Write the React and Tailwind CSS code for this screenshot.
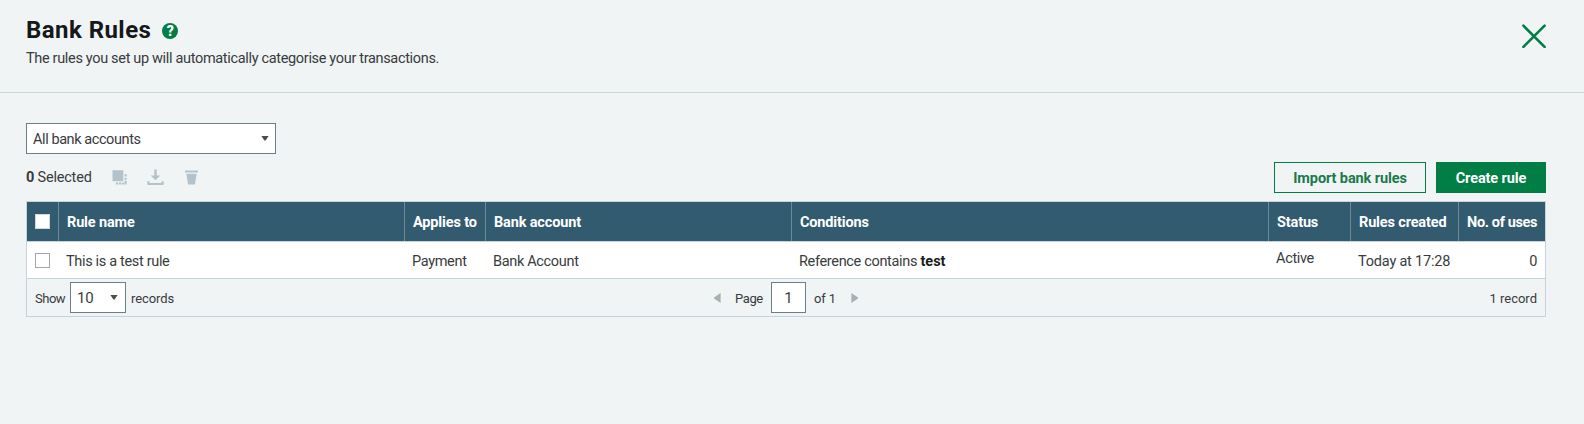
import clsx from "clsx";

const columns = [
  { key: "name", label: "Rule name", width: "w-[346px]" },
  { key: "appliesTo", label: "Applies to", width: "w-[81px]" },
  { key: "account", label: "Bank account", width: "w-[306px]" },
  { key: "conditions", label: "Conditions", width: "w-[477px]" },
  { key: "status", label: "Status", width: "w-[82px]" },
  { key: "created", label: "Rules created", width: "w-[108px]" },
  { key: "uses", label: "No. of uses", width: "w-[86px]" },
];

const rules = [
  {
    name: "This is a test rule",
    appliesTo: "Payment",
    account: "Bank Account",
    conditions: (
      <>
        Reference contains <b className="font-bold tracking-normal text-[#1b1d1e]">test</b>
      </>
    ),
    status: "Active",
    created: "Today at 17:28",
    uses: 0,
  },
];

function Caret() {
  return (
    <svg width="8" height="5" viewBox="0 0 8 5" fill="#4d4d4d">
      <path d="M0.4 0h7.2L4.6 4.4h-1.2z" />
    </svg>
  );
}

function Header() {
  return (
    <header className="flex h-[93px] justify-between border-b border-[#ccd6db] pl-[26px] pr-[38px]">
      <div className="pt-[14px]">
        <div className="flex items-center">
          <h1 className="text-[24px] leading-8 font-bold tracking-[0.45px] text-[#161819]">
            Bank Rules
          </h1>
          <span className="mt-[2px] ml-[11px] flex h-4 w-4 items-center justify-center rounded-full bg-[#007e45] text-[14px] leading-none font-black tracking-normal text-white">
            ?
          </span>
        </div>
        <p className="mt-[2px] leading-[22px]">
          The rules you set up will automatically categorise your transactions.
        </p>
      </div>
      <button className="mt-6 h-6 w-6" aria-label="Close">
        <svg width="24" height="24" viewBox="0 0 24 24" stroke="#007e45" strokeWidth="2.6" strokeLinecap="round">
          <path d="M1.4 1.7l21.2 21.2M22.6 1.7L1.4 22.9" />
        </svg>
      </button>
    </header>
  );
}

function Toolbar() {
  return (
    <div className="mt-[7px] flex h-8 items-center">
      <span className="w-[86px] pt-px tracking-[-0.2px] whitespace-nowrap">
        <b className="font-bold">0</b> Selected
      </span>
      <svg width="16" height="15" viewBox="0 0 16 15" fill="#b3c2cb">
        <path d="M0.5 0.3h10.8v10.9H0.5zM12.5 4.3h2.2v2.2h-2.2zM12.5 7.7h2.2v2h-2.2zM12.5 10.8h2.2v3.6h-2.2zM3.8 12.6h2.4v1.8H3.8zM6.9 12.6h2.2v1.8H6.9zM9.7 12.6h2.2v1.8H9.7z" />
      </svg>
      <svg className="ml-[19px]" width="17" height="17" viewBox="0 0 17 17" fill="#b3c2cb">
        <path d="M7.3 0.5h2.4v6h3.6L8.5 11.3 3.7 6.5h3.6zM0.3 12.3h2.2v1.7h12v-1.7h2.2v2.9q0 .8-.8.8H1.1q-.8 0-.8-.8z" />
      </svg>
      <svg className="ml-[21px]" width="13" height="15" viewBox="0 0 13 15" fill="#b3c2cb">
        <path d="M0 0.5h13v2H0zM1.3 3.8h10.4L10 14q-.1.6-.7.6H3.7q-.6 0-.7-.6z" />
      </svg>
      <div className="ml-auto flex h-[31px] gap-[10px] font-bold tracking-[-0.1px]">
        <button className="w-[152px] border border-[#007e45] pt-[3px] text-[#1c7a4c]">
          Import bank rules
        </button>
        <button className="w-[110px] bg-[#007e45] pt-[3px] text-white">Create rule</button>
      </div>
    </div>
  );
}

function RulesTable() {
  return (
    <div className="mt-2 border border-[#c6d3da]">
      <div className="flex h-10 border-b border-[#c6d3da] bg-[#335b70] font-bold tracking-[-0.15px] text-white">
        <div className="flex w-8 items-center border-r border-[#6c8997] pl-2">
          <span className="h-[15px] w-[15px] border border-[#d5d9db] bg-white" />
        </div>
        {columns.map((col, i) => (
          <div
            key={col.key}
            className={clsx(
              "flex items-center whitespace-nowrap pt-[2px] pl-2",
              col.width,
              i < columns.length - 1
                ? "border-r border-[#6c8997]"
                : "tracking-[-0.35px]"
            )}
          >
            {col.label}
          </div>
        ))}
      </div>

      {rules.map((rule) => (
        <div key={rule.name} className="flex h-9 bg-white">
          <div className="flex w-8 items-center pt-px pl-2">
            <span className="h-[15px] w-[15px] border border-[#a6a6a6] bg-white" />
          </div>
          {columns.map((col) => (
            <div
              key={col.key}
              className={clsx(
                "flex items-center whitespace-pre pl-[7px]",
                col.width,
                col.key === "status" ? "pb-[3px]" : "pt-[3px]",
                col.key === "created" && "tracking-[-0.2px]",
                col.key === "uses" && "justify-end pr-2"
              )}
            >
              <span>{rule[col.key]}</span>
            </div>
          ))}
        </div>
      ))}

      <div className="grid h-[38px] grid-cols-3 items-center border-t border-[#c6d3da] px-2 text-[13px] tracking-normal whitespace-nowrap">
        <div className="flex items-center">
          <span className="w-[35px] pt-[2px] tracking-[-0.5px]">Show</span>
          <div className="mr-[5px] flex h-[31px] w-14 items-center justify-between border border-[#6a7f89] bg-white pr-[7px] pl-[6px] text-[15px] tracking-[-0.2px]">
            <span className="pt-px">10</span>
            <Caret />
          </div>
          <span className="pt-[2px] tracking-[-0.1px]">records</span>
        </div>
        <div className="flex items-center justify-center">
          <svg width="7" height="10" viewBox="0 0 7 10" fill="#a9b0b3">
            <path d="M6.6 0v10L0 5.5v-1z" />
          </svg>
          <span className="ml-[14px] w-7 pt-[2px] tracking-[-0.4px]">Page</span>
          <div className="mx-2 flex h-[31px] w-[35px] items-center justify-center border border-[#6a7f89] bg-white pt-px text-[15px]">
            1
          </div>
          <span className="w-[22px] pt-[2px] tracking-[-0.1px]">of 1</span>
          <svg className="ml-[15px]" width="7" height="10" viewBox="0 0 7 10" fill="#a9b0b3">
            <path d="M0.4 0v10L7 5.5v-1z" />
          </svg>
        </div>
        <div className="pt-[2px] text-right">1 record</div>
      </div>
    </div>
  );
}

export default function App() {
  return (
    <div className="min-h-screen w-full bg-[#f0f4f5] font-[Roboto,sans-serif] text-[14.5px] font-normal tracking-[-0.33px] text-[#383b3d]">
      <Header />
      <main className="pr-[38px] pl-[26px] pt-[30px]">
        <div className="flex h-[31px] w-[250px] items-center justify-between border border-[#6a7f89] bg-white pr-[6px] pl-[6px]">
          <span className="pt-[2px] tracking-[-0.42px]">All bank accounts</span>
          <Caret />
        </div>
        <Toolbar />
        <RulesTable />
      </main>
    </div>
  );
}
